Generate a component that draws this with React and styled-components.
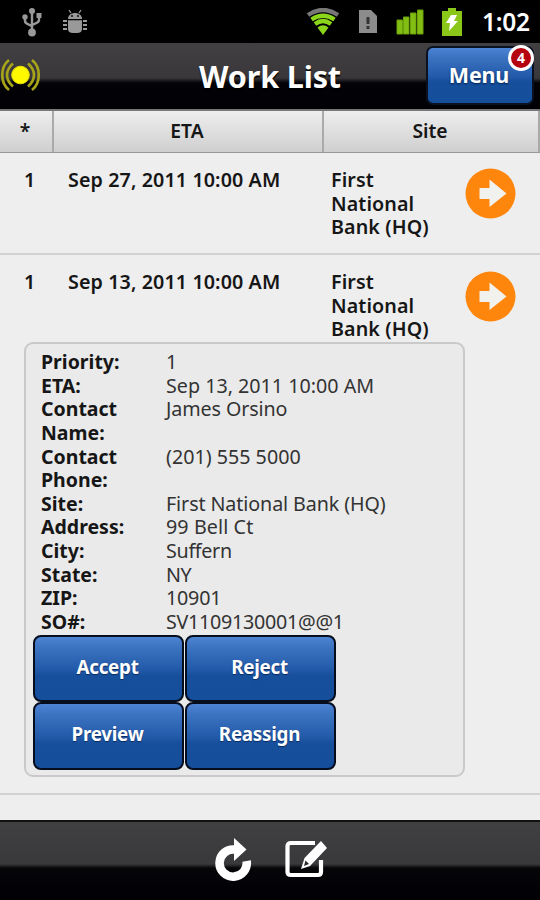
import React from "react";
import styled, { createGlobalStyle } from "styled-components";

const GlobalStyle = createGlobalStyle`
  * { box-sizing: border-box; }
  body {
    margin: 0;
    background: #eeeeee;
    color: #161616;
    font-family: "Noto Sans", "Open Sans", sans-serif;
    font-size: 19.7px;
    line-height: 23.64px;
    overflow: hidden;
  }
`;

const Screen = styled.main`
  width: 540px;
  height: 900px;
  display: flex;
  flex-direction: column;
  background: #eeeeee;
`;

const StatusBar = styled.div`
  height: 43px;
  flex: none;
  display: flex;
  align-items: center;
  justify-content: space-between;
  padding: 0 10px 0 21px;
  background: #000;
`;

const StatusGroup = styled.div`
  display: flex;
  align-items: center;
  gap: ${(p) => p.$gap};
`;

const Clock = styled.span`
  color: #fff;
  font-size: 24.5px;
  font-weight: 600;
  line-height: 43px;
  width: 48px;
  margin-left: 2px;
  white-space: nowrap;
  letter-spacing: -0.3px;
`;

const TitleBar = styled.header`
  height: 68px;
  flex: none;
  display: grid;
  grid-template-columns: 114px 1fr 114px;
  align-items: start;
  border-bottom: 2px solid #777;
  background: linear-gradient(#434043 0, #39373a 35px, #17161a 38px, #020207 40px, #000005 100%);
`;

const Title = styled.h1`
  margin: 0;
  color: #fff;
  text-align: center;
  font-size: 30.5px;
  font-weight: 700;
  line-height: 66px;
  letter-spacing: -0.15px;
  white-space: nowrap;
  text-shadow: 0 2px 1px #000;
`;

const BeaconIcon = styled.svg`
  margin-top: 14px;
`;

const buttonFill = "linear-gradient(#4d83d3 0, #3c74c2 16%, #2259a8 52%, #164f9b 62%, #154e9a 100%)";

const MenuButton = styled.button`
  position: relative;
  width: 108px;
  height: 59px;
  margin: 3px 0 0;
  padding: 0 2px 2px 0;
  border: 2px solid #0a1220;
  border-radius: 7px;
  background: ${buttonFill};
  color: #fff;
  font: 700 21.5px/50px "Noto Sans", sans-serif;
  letter-spacing: -0.2px;
  text-shadow: 0 1px 2px #00204f;
`;

const Badge = styled.span`
  position: absolute;
  top: -3px;
  right: -2px;
  width: 26px;
  height: 26px;
  border: 3px solid #fff;
  border-radius: 50%;
  background: #b50410;
  color: #fff;
  font-size: 14px;
  line-height: 19px;
  text-align: center;
  text-shadow: none;
`;

const ColumnHeads = styled.div`
  height: 42px;
  flex: none;
  display: grid;
  grid-template-columns: 54px 270px 216px;
  border-bottom: 1px solid #999;
  background: linear-gradient(#eeeeee, #cfcfcf);
`;

const ColumnHead = styled.div`
  padding-right: 2px;
  border-right: 2px solid #aaa;
  text-align: center;
  font-size: 19.3px;
  font-weight: 600;
  line-height: 39px;
`;

const Row = styled.section`
  height: ${(p) => p.$height};
  flex: none;
  padding-top: 15px;
  border-bottom: 2px solid #d2d2d2;
`;

const RowSummary = styled.div`
  height: 72px;
  display: grid;
  grid-template-columns: 44px 263px 134px 51px;
  padding-left: 24px;
  font-weight: 600;
  letter-spacing: 0.1px;
`;

const RowCell = styled.div`
  padding-right: ${(p) => p.$inset || "0"};
`;

const GoIcon = styled.svg`
  margin-top: ${(p) => p.$drop || "0"};
`;

const Details = styled.div`
  width: 441px;
  height: 435px;
  margin: 0 0 0 24px;
  padding: 6px 0 0 9px;
  border: 2px solid #c9c9c9;
  border-radius: 9px;
  background: #eaeaea;
`;

const Fields = styled.dl`
  margin: 0;
  padding-left: 6px;
  display: grid;
  grid-template-columns: 125px 1fr;
`;

const Label = styled.dt`
  max-width: 100px;
  font-weight: 700;
  font-size: 19.5px;
`;

const Value = styled.dd`
  margin: 0;
  color: #333;
  letter-spacing: ${(p) => p.$tracking || "0"};
`;

const Actions = styled.div`
  display: grid;
  grid-template-columns: 151px 151px;
  grid-auto-rows: 67.5px;
  margin: 1px 0 0 -2px;
  gap: 0 1px;
`;

const ActionButton = styled.button`
  padding: 0 2px 3px 0;
  border: 2px solid #060d1c;
  border-radius: 8px;
  background: ${buttonFill};
  color: #fff;
  font: 700 18.8px/24px "Noto Sans", sans-serif;
  letter-spacing: -0.25px;
  text-shadow: 0 1px 1px #0a2a60;
`;

const Footer = styled.footer`
  height: 80px;
  display: flex;
  justify-content: center;
  align-items: flex-start;
  gap: 32px;
  padding: 16px 0 0 3px;
  margin-top: auto;
  border-top: 2px solid #111;
  background: linear-gradient(#403f41 0, #39383a 42px, #060609 46px, #000005 100%);
`;

const UsbIcon = () => (
  <svg width="22" height="30" viewBox="0 0 22 30" fill="none" stroke="#999" strokeWidth="2.4">
    <path d="M11 4v20M4 11v3c0 4 7 3 7 6M18 9v4c0 4-7 3-7 6" />
    <circle cx="11" cy="25.5" r="3.9" fill="#999" stroke="none" />
    <circle cx="4" cy="10" r="2.7" fill="#999" stroke="none" />
    <circle cx="11" cy="4" r="3" fill="#999" stroke="none" />
    <path d="M15.5 6h5v5h-5z" fill="#999" stroke="none" />
  </svg>
);

const DebugIcon = () => (
  <svg width="26" height="26" viewBox="0 0 26 26" fill="#999">
    <path d="M6 10c0-8 14-8 14 0z" />
    <path d="M9 4L7 1M17 4l2-3" stroke="#999" strokeWidth="1.3" />
    <circle cx="10" cy="7" r="1" fill="#111" />
    <circle cx="16" cy="7" r="1" fill="#111" />
    <path d="M6 11.2h14V20q0 4-5 4h-4q-5 0-5-4z" />
    <path d="M1 12h4M1 16h4M1 20h4M21 12h4M21 16h4M21 20h4" stroke="#999" strokeWidth="2" />
  </svg>
);

const WifiIcon = () => (
  <svg width="34" height="28" viewBox="0 0 34 28" fill="none">
    <path d="M2 7Q17-3 32 7" stroke="#777" strokeWidth="4.4" />
    <path d="M5.5 11.5Q17 4 28.500 11.500M9 16Q17 10 25 16" stroke="#8bd51b" strokeWidth="4.2" />
    <path d="M11.500 19.500Q17 15 22.500 19.500L17 27z" fill="#8bd51b" />
  </svg>
);

const SimIcon = () => (
  <svg width="20" height="25" viewBox="0 0 20 25">
    <path d="M1 1h12l6 6v17H1z" fill="#8c8c8c" />
    <path d="M10 8v7M10 17v3" stroke="#353535" strokeWidth="3" />
  </svg>
);

const SignalIcon = () => (
  <svg width="28" height="26" viewBox="0 0 28 26" fill="#82bd13" stroke="#6aa009">
    <path d="M1 11h5.500v14H1zM7.500 8H13v17H7.500zM14.500 4H20v21h-5.500zM21.500 1H27v24h-5.500z" />
  </svg>
);

const BatteryIcon = () => (
  <svg width="20" height="28" viewBox="0 0 20 28">
    <path d="M6 0h8v3h6v25H0V3h6z" fill="#8bc718" />
    <path d="M9 7h6l-3 6h4L7 23l1-8H4z" fill="#fff" />
  </svg>
);

const Beacon = () => (
  <BeaconIcon width="42" height="36" viewBox="0 0 42 36" fill="none" stroke="#a6a51a" strokeWidth="2.7">
    <circle cx="20.5" cy="18" r="8.8" fill="#fff900" stroke="#e5e000" strokeWidth="1" />
    <path d="M9 3C0 10 0 26 9 33M13 6.500c-8 7-8 16 0 23M32 3c9 7 9 23 0 30M28 6.500c8 7 8 16 0 23" />
  </BeaconIcon>
);

const Go = ({ drop }) => (
  <GoIcon $drop={drop} width="51" height="51" viewBox="0 0 51 51">
    <circle cx="25.5" cy="25.5" r="25" fill="#ff860d" />
    <path d="M14.5 20h10v-8.5L41.500 25.500l-17 13.500V31h-10z" fill="#f1f1ee" />
  </GoIcon>
);

const RefreshIcon = () => (
  <svg width="37" height="44" viewBox="0 0 37 44">
    <path d="M20 11.600A13.600 13.600 0 1 0 31.600 23" fill="none" stroke="#fff" strokeWidth="8.6" />
    <path d="M19 0l12.500 11.500L19 23z" fill="#fff" />
  </svg>
);

const EditIcon = () => (
  <svg width="44" height="40" viewBox="0 0 44 40">
    <path d="M31 5H7Q3.500 5 3.500 8v26q0 3 3.500 3h27q3 0 3-3V22" fill="none" stroke="#fff" strokeWidth="4.2" />
    <path d="M17 31l3.500-11L37 3l6 7-17 18z" fill="#fff" />
    <path d="M21.500 22.500l3.500 3.500-5 2z" fill="#29292b" />
  </svg>
);

const jobs = [
  { eta: "Sep 27, 2011 10:00 AM", site: "First National Bank (HQ)" },
  { eta: "Sep 13, 2011 10:00 AM", site: "First National Bank (HQ)" },
];

const fields = [
  ["Priority:", "1"],
  ["ETA:", "Sep 13, 2011 10:00 AM"],
  ["Contact Name:", "James Orsino", "-0.1px"],
  ["Contact Phone:", "(201) 555 5000"],
  ["Site:", "First National Bank (HQ)", "-0.1px"],
  ["Address:", "99 Bell Ct", "0.1px"],
  ["City:", "Suffern", "-0.3px"],
  ["State:", "NY", "-0.4px"],
  ["ZIP:", "10901", "-0.2px"],
  ["SO#:", "SV1109130001@@1", "-0.27px"],
];

const Summary = ({ job, drop }) => (
  <RowSummary>
    <RowCell>1</RowCell>
    <RowCell>{job.eta}</RowCell>
    <RowCell $inset="30px">{job.site}</RowCell>
    <Go drop={drop} />
  </RowSummary>
);

export default function App() {
  return (
    <Screen>
      <GlobalStyle />
      <StatusBar>
        <StatusGroup $gap="19px">
          <UsbIcon />
          <DebugIcon />
        </StatusGroup>
        <StatusGroup $gap="18px">
          <WifiIcon />
          <SimIcon />
          <SignalIcon />
          <BatteryIcon />
          <Clock>1:02</Clock>
        </StatusGroup>
      </StatusBar>
      <TitleBar>
        <Beacon />
        <Title>Work List</Title>
        <MenuButton>
          Menu
          <Badge>4</Badge>
        </MenuButton>
      </TitleBar>
      <ColumnHeads>
        <ColumnHead>*</ColumnHead>
        <ColumnHead>ETA</ColumnHead>
        <ColumnHead>Site</ColumnHead>
      </ColumnHeads>
      <Row $height="102px">
        <Summary job={jobs[0]} />
      </Row>
      <Row $height="540px">
        <Summary job={jobs[1]} drop="1px" />
        <Details>
          <Fields>
            {fields.map(([label, value, tracking]) => (
              <React.Fragment key={label}>
                <Label>{label}</Label>
                <Value $tracking={tracking}>{value}</Value>
              </React.Fragment>
            ))}
          </Fields>
          <Actions>
            <ActionButton>Accept</ActionButton>
            <ActionButton>Reject</ActionButton>
            <ActionButton>Preview</ActionButton>
            <ActionButton>Reassign</ActionButton>
          </Actions>
        </Details>
      </Row>
      <Footer>
        <RefreshIcon />
        <EditIcon />
      </Footer>
    </Screen>
  );
}
